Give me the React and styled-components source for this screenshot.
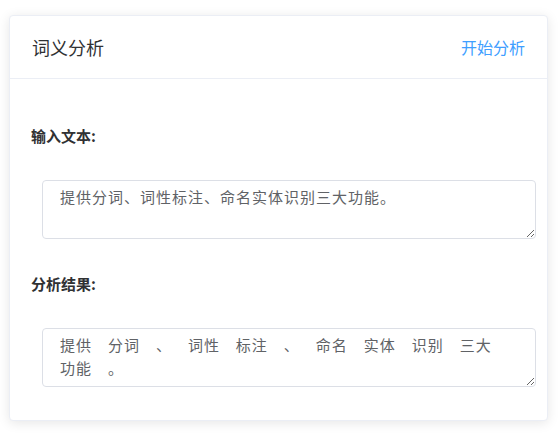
import React, { useState } from "react";
import styled, { createGlobalStyle } from "styled-components";

const GlobalStyle = createGlobalStyle`
    body {
        margin: 0;
        background: #ffffff;
        font-family: "Noto Sans CJK SC", "Noto Sans", sans-serif;
    }
`;

const inputText = "提供分词、词性标注、命名实体识别三大功能。";
const resultText = "提供 分词 、 词性 标注 、 命名 实体 识别 三大 功能 。";

export default function App() {
    const [text, setText] = useState(inputText);
    const [result, setResult] = useState(resultText);

    return (
        <Page>
            <GlobalStyle />
            <Card>
                <CardHeader>
                    <Title>词义分析</Title>
                    <TextButton onClick={() => setResult(result)}>开始分析</TextButton>
                </CardHeader>
                <CardBody>
                    <FormItem>
                        <Label>输入文本:</Label>
                        <TextArea
                            value={text}
                            onChange={(event) => {
                                setText(event.target.value);
                            }}
                        />
                    </FormItem>
                    <FormItem>
                        <Label>分析结果:</Label>
                        <TextArea
                            value={result}
                            onChange={(event) => {
                                setResult(event.target.value);
                            }}
                        />
                    </FormItem>
                </CardBody>
            </Card>
        </Page>
    );
}

const Page = styled.div`
    padding: 15px 11px 17px 9px;
`;

const Card = styled.div`
    background: #ffffff;
    border: 1px solid #ebeef5;
    border-radius: 4px;
    box-shadow: 0 2px 12px 0 rgba(0, 0, 0, 0.1);
    overflow: hidden;
`;

const CardHeader = styled.div`
    display: flex;
    justify-content: space-between;
    align-items: center;
    height: 62px;
    padding: 0 22px;
    border-bottom: 1px solid #ebeef5;
`;

const Title = styled.span`
    font-size: 18px;
    color: #303133;
`;

const TextButton = styled.button`
    border: none;
    background: transparent;
    padding: 0;
    font-family: inherit;
    font-size: 16px;
    color: #409eff;
    cursor: pointer;
`;

const CardBody = styled.div`
    display: flex;
    flex-direction: column;
    gap: 35px;
    padding: 47px 11px 33px 21px;
`;

const FormItem = styled.div`
    display: flex;
    flex-direction: column;
    gap: 34px;
`;

const Label = styled.label`
    font-size: 15px;
    line-height: 20px;
    font-weight: bold;
    color: #303133;
`;

const TextArea = styled.textarea`
    box-sizing: border-box;
    display: block;
    margin-left: 11px;
    width: calc(100% - 11px);
    height: 59px;
    padding: 5px 15px 5px 17px;
    border: 1px solid #dcdfe6;
    border-radius: 4px;
    font-family: "Noto Sans CJK SC", "Noto Sans", sans-serif;
    font-size: 15px;
    line-height: 22.5px;
    letter-spacing: 1px;
    word-spacing: 11.6px;
    color: #606266;
    outline: none;
`;
